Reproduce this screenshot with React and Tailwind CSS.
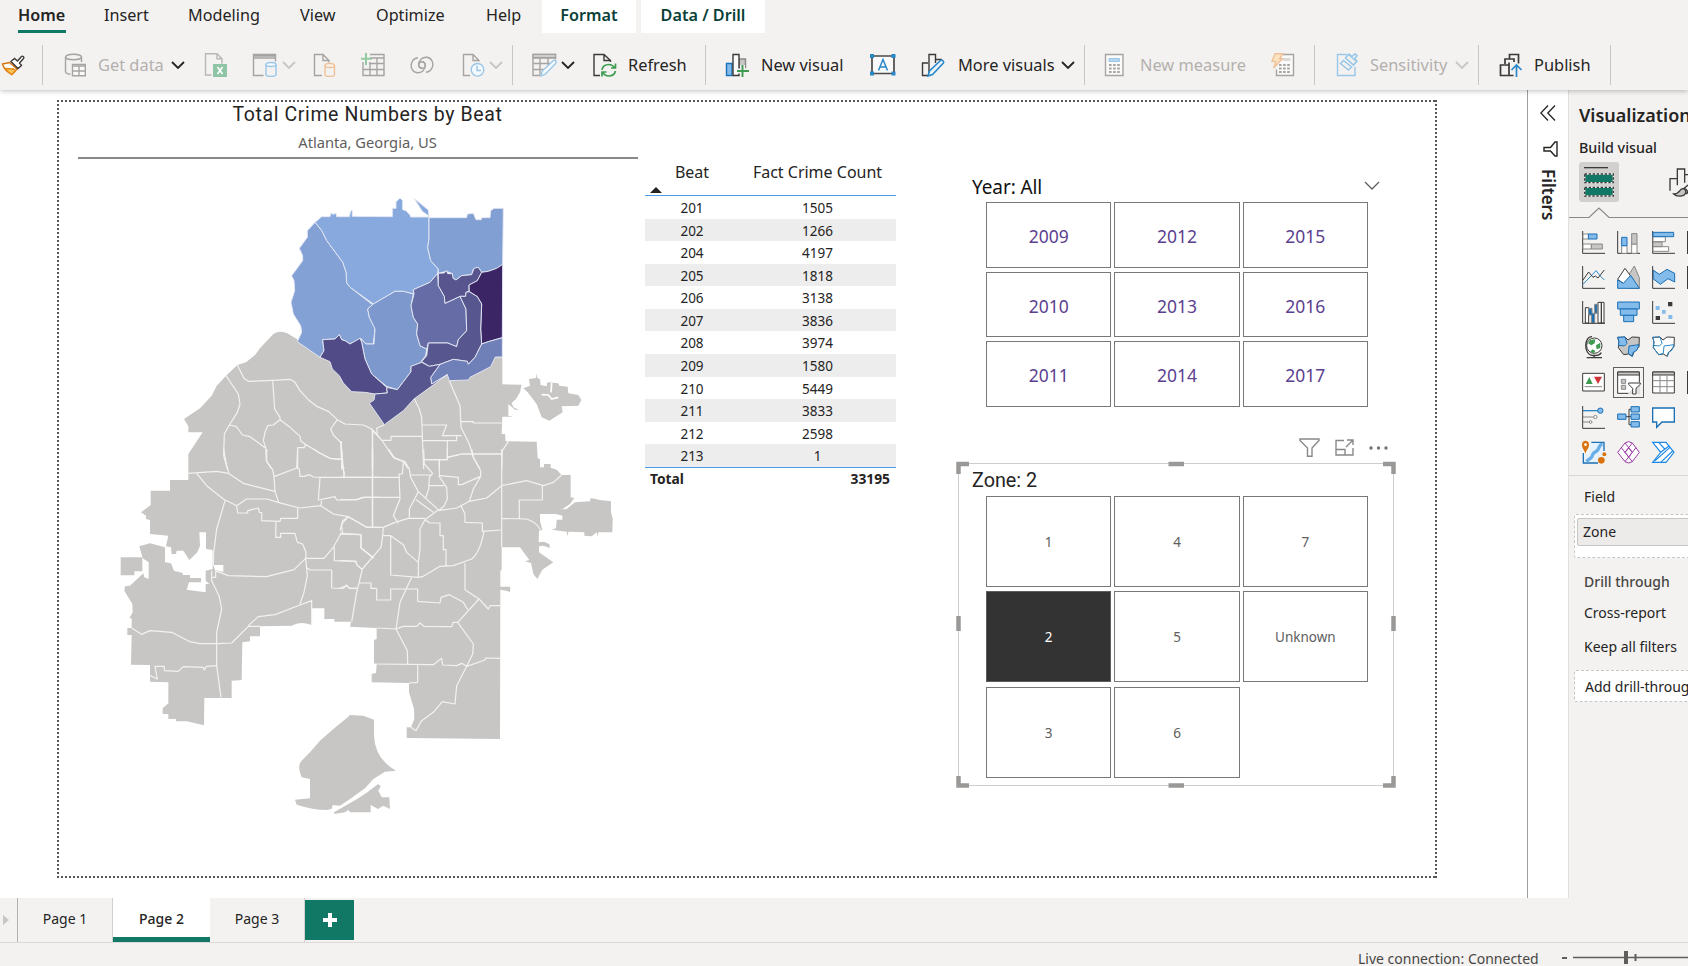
import React from "react";

const GRAY = "#c8c6c4";

function Svg({ className = "w-6 h-6", box = "0 0 24 24", children }) {
  return (
    <svg viewBox={box} className={"shrink-0 block " + className} fill="none" strokeWidth="1.4">
      {children}
    </svg>
  );
}

function Chevron({ className, color = "#252423" }) {
  return (
    <svg viewBox="0 0 14 8" className={"shrink-0 block w-[14px] h-2 " + className} fill="none" stroke={color} strokeWidth="1.8">
      <path d="M1 1l6 6 6-6" />
    </svg>
  );
}

function Sep({ className }) {
  return <div className={"shrink-0 w-px h-10 bg-[#c8c6c4] " + className} />;
}

function Label({ className, children }) {
  return <div className={"shrink-0 text-[16.4px] leading-6 " + className}>{children}</div>;
}

/* ---------- ribbon ---------- */

const menu = [
  ["Insert", "ml-[38px] w-[43px]"],
  ["Modeling", "ml-[41px] w-[72px]"],
  ["View", "ml-[40px] w-[37px]"],
  ["Optimize", "ml-[39px] w-[70px]"],
  ["Help", "ml-[40px] w-[37px]"],
];

function MenuBar() {
  return (
    <div className="flex h-[33px] text-[16.2px] leading-[30px] text-[#252423]">
      <div className="ml-[18px] w-12 border-b-[3px] border-[#117865] font-semibold">Home</div>
      {menu.map(([t, c]) => (
        <div key={t} className={c}>{t}</div>
      ))}
      <div className="ml-[19px] w-[94px] bg-white text-center font-semibold text-[#0b3f38]">Format</div>
      <div className="ml-[5px] w-[124px] bg-white text-center font-semibold text-[#0b3f38]">Data / Drill</div>
    </div>
  );
}

const G = "#a6a4a2";
const swirl = "M12 15.300a3.300 3.300 0 1 1 3.300-3.300c0 4.500-3.500 8-8 7.800C2.500 19.500 0 14 1.800 9.500 3 6.500 5.800 5 8 4.800";

function Toolbar() {
  return (
    <div className="flex h-[57px] items-center pb-[5px] pt-[12px] text-[#252423]">
      <Svg className="ml-[1px] w-6 h-6">
        <path d="M1.5 11l7-1.5L16 16l-5 5.5C6 19 3 16 1.5 11z" fill="#fff" stroke="#d9730d" />
        <path d="M4.500 15.500l8 .5 2 1.500-3.500 4c-3-1.500-5-3.500-6.500-6z" fill="#fcc65a" stroke="#e8891c" />
        <path d="M10 8.500l3.500-3 3 2.500 4-4.500c1-1 3 .5 2 2L18.500 10l2 2.500-3.500 3z" fill="#fff" stroke="#3b3a39" />
      </Svg>
      <Sep className="ml-[17px]" />
      <Svg className="ml-[21px] w-6 h-6">
        <ellipse cx="9.500" cy="4" rx="8" ry="2.800" stroke={G} />
        <path d="M1.500 4v14.500c0 1.500 2 2.500 5 2.800M17.500 4v5" stroke={G} />
        <path d="M8.500 11.500h12.800v11.300H8.500z" stroke={G} fill="#fafafa" />
        <path d="M8.500 13h12.800M8.500 18h12.800M15 13v9.500" stroke={G} />
      </Svg>
      <Label className="ml-[10px] w-[66px] text-[#b3b0ad]">Get data</Label>
      <Chevron className="ml-[7px]" />
      <Svg className="ml-[19px] w-6 h-6">
        <path d="M7.500 22H1.500V.8h11.500l5 5v5" stroke="#b9b7b5" />
        <path d="M13 .8v5h5" stroke="#b9b7b5" />
        <path d="M9 11h14v13H9z" fill="#8fc4a4" />
        <path d="M13.500 14l5 7M18.500 14l-5 7" stroke="#fff" strokeWidth="1.600" />
      </Svg>
      <Svg className="ml-[24px] w-[26px] h-6" box="0 0 26 24">
        <path d="M11.500 22.500H1.500V1.500h22v7M1.500 5h22M1.500 3h22" stroke={G} />
        <path d="M14 11.500v10c0 2.500 10 2.500 10 0v-10" stroke="#9ac7e8" />
        <ellipse cx="19" cy="11.500" rx="5" ry="2" stroke="#9ac7e8" fill="#f3f9fd" />
      </Svg>
      <Chevron className="ml-[4px]" color="#c8c6c4" />
      <Svg className="ml-[17px] w-6 h-6">
        <path d="M9 22.500H1.500v-21H10l6 6v2M10 1.500v6h6" stroke={G} />
        <path d="M12 12.500v9c0 2.500 9.500 2.500 9.500 0v-9" stroke="#eec19a" />
        <ellipse cx="16.800" cy="12.500" rx="4.700" ry="2" stroke="#eec19a" fill="#fdf6ef" />
      </Svg>
      <Svg className="ml-[24px] w-6 h-6">
        <path d="M9 1.500h14v21H2V9M9 5h14M8 10.500h15M2 16.500h21M9 9v13M16 5v17" stroke={G} />
        <path d="M5 0v12M0 5.800h11" stroke="#93c9a3" strokeWidth="2" />
      </Svg>
      <Svg className="ml-[25px] w-6 h-6">
        <path d={swirl} stroke={G} />
        <path d={swirl} stroke={G} transform="rotate(180 12 12)" />
      </Svg>
      <Svg className="ml-[28px] w-6 h-6">
        <path d="M8 22.500H1.500v-21H11l6 6v1M11 1.500v6h6" stroke={G} />
        <circle cx="15.500" cy="16.800" r="6.300" stroke="#9ac7e8" fill="#f3f9fd" />
        <path d="M15 12.500v5h4" stroke="#9ac7e8" />
      </Svg>
      <Chevron className="ml-[3px]" color="#c8c6c4" />
      <Sep className="ml-[9px]" />
      <Svg className="ml-[19px] w-[25px] h-6" box="0 0 25 24">
        <path d="M1 1.500h22.500v5M1 5h22M1 1.500v21h7M1 10.500h17M1 16.500h12M8 5v17M16 5v7" stroke={G} />
        <path d="M1 1.500h22.500v3H1z" fill="#dddbd9" stroke={G} />
        <path d="M9 22.800l1.500-5L21.500 7.500c1.500-1 3.500 1 2.300 2.800L13 21.500z" fill="#f7fbfe" stroke="#9ac7e8" />
      </Svg>
      <Chevron className="ml-[4px]" />
      <Svg className="ml-[18px] w-6 h-6">
        <path d="M7 22.500H1v-21h10l6.500 6V9M11 1.500v6h6.500" stroke="#3b3a39" />
        <path d="M9 17c.5-3.500 3.500-5.500 7-5.500 2.500 0 4.500 1.500 6 3.500M22.500 10.500V15h-4.500M22.500 18c-1 3.500-3.500 5-6.500 5-2.500 0-5-1.200-6-3.500M9 23.500V19h4.500" stroke="#3e9b4f" strokeWidth="1.700" />
      </Svg>
      <Label className="ml-[11px] w-[57px]">Refresh</Label>
      <Sep className="ml-[20px]" />
      <Svg className="ml-[19px] w-6 h-6">
        <path d="M14 6h6.500v9H14z" fill="#c8c6c4" stroke="#8a8886" />
        <path d="M1.500 10.500h5.500v12H1.500z" fill="#83bbea" stroke="#1a73b9" />
        <path d="M8 1.500h6v21H8z" fill="#fafafa" stroke="#3b3a39" />
        <path d="M17.500 12v12M12 18h12" stroke="#f3f2f1" strokeWidth="5" />
        <path d="M17.500 12v12M12 18h12" stroke="#3e9b4f" strokeWidth="1.900" />
      </Svg>
      <Label className="ml-[12px] w-[82px]">New visual</Label>
      <Svg className="ml-[27px] w-[26px] h-6" box="0 0 26 24">
        <path d="M2 3h22v17.500H2z" fill="#fafafa" stroke="#4a4948" strokeWidth="1.700" />
        <path d="M0 1h4v4H0zM21.500 1h4v4h-4zM0 18.500h4v4H0zM21.500 18.500h4v4h-4z" fill="#2b88c8" />
        <path d="M8.500 17.500L13 6.500l4.500 11M10 14h6" stroke="#2b88c8" strokeWidth="1.500" />
      </Svg>
      <Svg className="ml-[25px] w-6 h-6">
        <path d="M7 10H1.500v12.500H7M8 20V1.500h6.500V10M15 6.500h5v3" stroke="#3b3a39" />
        <path d="M7 23l1.500-5L19.500 7.500c1.500-1.200 4 1 2.700 2.800L11.500 21.500z" fill="#eaf4fb" stroke="#2b88c8" strokeWidth="1.600" />
      </Svg>
      <Label className="ml-[13px] w-[96px]">More visuals</Label>
      <Chevron className="ml-[7px]" />
      <Sep className="ml-[9px]" />
      <Svg className="ml-[19px] w-6 h-6">
        <path d="M1.500 1.500h17.500v21H1.500z" fill="#fafafa" stroke={G} />
        <path d="M5 5.500h10.500v3H5z" fill="#b6d7ee" stroke="#9ac7e8" strokeWidth="1" />
        <path d="M5 12h11M5 15.500h11M5 19h11" stroke={G} strokeWidth="2.200" strokeDasharray="2.600 1.500" />
      </Svg>
      <Label className="ml-[12px] w-[105px] text-[#b3b0ad]">New measure</Label>
      <Svg className="ml-[26px] w-6 h-6">
        <path d="M12 1.500h10.500v21H5.500v-6" stroke={G} fill="#fafafa" />
        <path d="M12 5h7.500v3H12z" fill="#dddbd9" />
        <path d="M8 12h12M8 15.500h12M8 19h12" stroke={G} strokeWidth="2.200" strokeDasharray="2.600 1.500" />
        <path d="M4 .8h8l-3.500 5h3L2.500 15 5 8.500H1z" fill="#fce3c2" stroke="#eec19a" />
      </Svg>
      <Sep className="ml-[19px]" />
      <Svg className="ml-[21px] w-6 h-6">
        <path d="M11 1.500H1.500v21h17.500V14" stroke="#9ac7e8" />
        <path d="M4.500 10.500l3-3 8 6.500-3 3zM9.500 5l3-3.500 8 7-3 3.500zM13 1l3 2.500L19 .8l2 2-2.500 3 3 2.700" stroke="#9ac7e8" strokeWidth="1.600" />
      </Svg>
      <Label className="ml-[10px] w-[77px] text-[#b3b0ad]">Sensitivity</Label>
      <Chevron className="ml-[8px]" color="#c8c6c4" />
      <Sep className="ml-[9px]" />
      <Svg className="ml-[20px] w-6 h-6">
        <path d="M6 11V6h4.500M10.500 6V1.500h9v9M6 6h9v3M1.500 12h8.500v10.500H1.500zM10 12V9.500M10 22.500h4.500" stroke="#3b3a39" strokeWidth="1.700" />
        <path d="M17.500 24V12M12.500 17l5-5 5 5" stroke="#2b88c8" strokeWidth="1.700" />
      </Svg>
      <Label className="ml-[11px] w-[57px]">Publish</Label>
      <Sep className="ml-[19px]" />
    </div>
  );
}

/* ---------- crime map ---------- */

const beats = [
  ["#88a9de", "M645 130 665 113 690 113 693 102 700 106 708 102 710 113 748 113 752 95 757 95 757 112 877 113 877 88 888 88 888 68 900 57 908 65 908 92 918 95 930 108 932 114 985 114 985 110 967 97 942 58 985 93 987 114 987 180 983 205 992 245 1015 270 1013 283 990 310 940 332 940 345 910 337 885 337 820 375 750 325 740 312 738 280 728 250 680 185 665 155Z"],
  ["#83a1d4", "M645 130 665 155 680 185 728 250 738 280 740 312 750 325 815 375 820 375 803 390 808 415 825 448 820 495 798 495 782 478 750 495 735 485 725 482 718 467 705 480 668 482 672 515 660 535 592 488 605 460 602 440 580 405 573 370 584 335 582 305 575 290 608 245 608 230 598 208 622 175 622 155Z"],
  ["#819fd2", "M987 116 1100 116 1102 105 1120 103 1128 122 1144 122 1145 116 1170 116 1172 95 1182 88 1210 88 1208 256 1190 268 1165 277 1145 280 1135 265 1120 270 1115 287 1085 290 1068 303 1058 297 1057 284 1040 277 1015 283 1015 270 992 245 983 205 987 180Z"],
  ["#7d98cc", "M820 375 885 337 910 337 940 345 933 380 940 415 953 435 950 465 960 500 980 510 977 530 960 552 933 562 933 578 892 632 860 622 815 585 795 540 785 490 782 478 798 495 822 495 825 450 808 415 803 390Z"],
  ["#514c87", "M668 482 705 480 718 467 725 482 735 485 750 495 780 478 785 490 795 540 815 585 860 625 862 642 825 645 795 640 755 638 730 612 718 590 697 570 690 548 660 535 672 515Z"],
  ["#666da6", "M1013 283 990 310 940 332 942 345 933 380 940 415 953 435 950 465 960 500 980 510 985 492 1043 492 1070 503 1075 482 1100 455 1098 390 1080 352 1035 373 1033 352 1015 320Z"],
  ["#57548e", "M1015 283 1032 282 1040 275 1043 284 1057 284 1059 298 1068 303 1085 290 1115 287 1122 268 1135 265 1145 280 1132 305 1107 318 1107 337 1098 340 1097 352 1080 352 1035 373 1033 352 1015 320Z"],
  ["#3b2565", "M1145 280 1165 277 1190 268 1208 256 1207 476 1165 488 1145 495 1142 450 1145 375 1132 353 1108 338 1107 318 1132 305Z"],
  ["#58568f", "M1098 340 1108 338 1132 353 1145 375 1142 450 1145 495 1125 535 1105 556 1102 547 1060 541 1020 556 988 562 965 548 980 530 985 492 1043 492 1070 503 1075 482 1100 455 1098 390 1080 352 1097 352Z"],
  ["#6f7fb8", "M1207 476 1165 488 1145 495 1125 535 1105 556 1102 547 1060 541 1020 556 992 595 995 615 1042 587 1048 605 1105 603 1110 595 1172 563 1186 534 1207 534Z"],
  ["#58568f", "M965 550 988 562 1020 556 992 595 995 615 1042 587 942 660 910 695 853 737 808 672 822 663 825 645 862 642 860 625 892 632 933 578 933 562Z"],
];

const land = [
  // city body
  "M252 720 300 688 335 650 350 620 378 590 412 558 438 550 465 528 480 508 520 465Q540 452 562 463L590 480 660 535 1207 535 1207 616 1265 617 1260 640 1248 660 1235 672 1240 685 1257 692 1245 692 1225 675 1225 710 1240 713 1207 713 1205 765 1215 765 1217 787 1310 788 1313 838 1320 840 1320 865 1332 865 1332 855 1352 855 1352 866 1370 872 1385 888 1412 888 1412 955 1423 957 1410 975 1385 992 1368 993 1368 1005 1320 1005 1320 1025 1327 1053 1317 1055 1316 1090 1332 1088 1348 1095 1350 1107 1330 1100 1317 1102 1317 1120 1360 1150 1327 1172 1312 1200 1300 1185 1293 1152 1275 1147 1288 1143 1260 1105 1205 1105 1205 1172 1201 1175 1201 1223 1231 1223 1230 1240 1220 1235 1201 1232 1200 1680 920 1677 920 1645 933 1645 943 1620 942 1590 927 1540 927 1512 815 1510 815 1485 828 1482 830 1455 822 1453 822 1383 830 1380 830 1347 750 1343 753 1328 703 1328 703 1320 673 1320 673 1288 635 1288 635 1338Q600 1325 575 1340L480 1342 480 1372 450 1372 450 1387 427 1390 425 1503 395 1505 395 1557 313 1557 312 1639 260 1627 228 1627 228 1620 205 1620 205 1605 188 1605 188 1588 205 1573 205 1510 150 1508 150 1458 93 1457 95 1368 82 1368 82 1347 95 1347 95 1318 88 1318 98 1300 97 1275 73 1235 75 1222 90 1220 130 1183 133 1195 146 1200 146 1150 128 1138 118 1102 150 1093 195 1105 195 1150 213 1153 222 1175 248 1182 248 1188 270 1188 270 1197 303 1197 303 1210 267 1210 260 1232 317 1240 317 1215 328 1215 317 1205 317 1175 338 1170 338 1113 318 1110 318 1060 298 1060 300 1100 292 1120 268 1143 250 1115 230 1115 228 1125 215 1125 213 1105 198 1102 205 1070 150 1065 150 1023 138 1020 138 1010 123 1000 152 978 152 935 210 935 210 903 265 903 265 825 308 760 265 760 265 742Z",
  // west exclave
  "M62 1135H127V1177H103V1189H62Z",
  // north-east exclave
  "M1270 628 1290 620 1287 600 1308 597 1310 582 1312 597 1320 600 1322 618 1340 622 1342 610 1375 613 1378 620 1403 623 1405 643 1435 648 1444 663 1435 680 1385 682 1388 700Q1365 715 1348 725L1325 715 1310 675 1283 640Z",
  // east exclave
  "M1355 1052 1368 1048 1370 1022 1387 1022 1387 1010 1368 1005 1368 993 1400 990 1425 970 1470 967 1472 957 1500 963 1533 967 1533 1000 1538 1020 1537 1060 1495 1060 1493 1072 1490 1060 1475 1072 1453 1070 1453 1060 1405 1058 1403 1073 1400 1058Z",
  // airport
  "M745 1613 750 1608 790 1610 822 1622 822 1670Q825 1740 888 1775L855 1778 820 1800 795 1828 750 1860 720 1880 698 1878 695 1890 680 1893Q640 1893 590 1877L585 1862 630 1858 630 1800 605 1795Q590 1760 605 1745L630 1720 660 1685 700 1650Z",
  "M835 1815 842 1822 835 1835 845 1855 868 1855 870 1890 850 1880 834 1890 812 1878 812 1900 750 1900 745 1893 735 1900 703 1905 702 1900 775 1858 800 1841Z",
];

const bordersNW = "M412 558 432 598 445 607 520 604 570 601 585 610 600 635 625 662 650 682 685 697 712 722 735 735 790 738 815 750 838 775M378 590 415 645 420 675 412 700 388 738 373 765 371 830 382 870M388 738 408 742 428 768 450 773 495 806M518 604 524 690 540 715 540 722 520 738 503 740 495 760 490 785 497 805 499 845 515 870M540 722 570 745 600 772 602 785 618 797 660 822 690 838 722 842M618 797 612 806 593 806 593 870M712 722 692 750 700 768 722 790 725 850 732 870M818 755V870";
const bordersNE = "M92 748 125 783 160 835 190 848 205 870M133 737 110 748 112 765M125 784H153V772H245M222 655 226 665 238 690 245 715 248 800 251 870M248 738H320L307 770H365M248 785H350V772M322 785V840M251 842H322M298 842V870M328 605 360 680 363 745 388 795 400 835 420 870M363 728H400V732H485M322 835 365 825H485M505 788 487 815 485 870M97 755V870M0 788H4L5 870";
const bordersSW = "M265 73 350 67 385 73 430 103 525 127M290 73 320 110 370 150 410 170M371 0 380 50 387 73M500 0V38L518 62 522 83 525 127 536 160M522 83 590 57 593 0M593 57 598 60 600 82 612 82 628 77 640 84 660 85H840M640 0 660 13 690 28 724 30M724 0 728 60 733 70 732 85M818 0V233M660 85 655 153 705 143 710 153 770 152 790 145H840M410 170 440 150 500 150 545 163 600 177 662 170 665 155M410 170 413 192H443V185L475 177 478 190 485 191V215L540 217 542 208H593V178M662 170 700 195 745 203 800 235H840M528 217 527 265H542V253H585L592 280 608 285 618 310 617 328H672L700 295 722 255 783 257V297L822 327M745 203 725 225 727 252M703 295V335L768 337 770 347 787 362M375 155 350 240 341 310 340 350M347 365V385H335M335 365V395L357 440 365 480 350 550V650L363 745M345 365 385 380 500 383 582 362 617 328 622 380 612 430 600 465M622 357 630 363H695V417L730 418 740 408 748 418H772M445 530 475 503 525 497 600 468 635 455V528M480 532H445L395 582 350 584H300L270 578 215 550 150 545 125 556 95 537M150 680 172 690 165 652H193V665L235 667 250 653 310 655 313 663 320 652 350 650";
const bordersSE = "M5 0 12 83M97 0V233M145 0 165 28 195 38 208 60 212 85 235 128 295 182M0 85H180M0 152H50L70 145H180M190 38 187 75H177L180 150 160 200 175 223M0 245 8 215 25 203 80 235H128M128 260 130 235 165 220 205 208H255M235 128 208 180V208M228 152 280 190M251 0 253 45 278 73 268 85 266 120 257 147M212 78H275M298 30V83L320 115 322 150 312 172 295 185M251 32H322V0M322 25 365 15H485M395 0 400 25 422 65V82L365 107H355V85L300 80M422 82 400 120 388 157M268 110H312M295 185 350 177 388 157 440 147 485 110 560 95 610 110 640 100 665 78M295 182 255 212 240 240V300L235 340V385M255 212 270 222H300V260H310V302H318V350M363 170 375 195V220L427 222V247L482 243M485 0V295M485 208 560 210Q590 220 602 243M538 208V153H607V110M432 247Q420 310 395 330L340 350 300 352 250 382 235 385 152 378V260H128L123 295 67 360 50 430 35 518M152 260 190 287 200 310 235 340M0 253 63 257V297L100 327M0 335 48 337 50 347 67 362M0 417 20 410 28 418H50M57 402H93V418H110V453H152V420H233V457L300 462 303 445 328 437 370 460 383 482M215 385 180 460 168 540 202 605 203 645M375 343V422L417 450 445 480 450 470H480M417 450 353 520 400 585 398 615 380 652 350 710 345 765 307 758 280 790 245 815 228 845 213 835M110 537 168 540 190 532H230L240 522 252 532 335 533 340 520H353M110 645 280 647 305 628 308 648 350 650 365 643 380 652 435 633 437 627 480 628M233 648V700L207 702";

function CrimeMap() {
  return (
    <svg viewBox="0 0 1590 1950" className="ml-[22px] mt-[20px] block h-[650px] w-[530px]" fill="none" strokeLinejoin="round">
      {land.map((d) => <path key={d} d={d} fill={GRAY} />)}
      <path d="M340 1158H370V1179L345 1173Z" fill="#fff" />
      <path d="M1325 647 1345 648 1355 660 1375 655M1355 612 1353 640" stroke="#fff" strokeWidth="5" />
      <g stroke="#f3f2f1" strokeWidth="3.600">
        <path d={bordersNW} />
        <path d={bordersNE} transform="translate(720 0)" />
        <path d={bordersSW} transform="translate(0 810)" />
        <path d={bordersSE} transform="translate(720 810)" />
      </g>
      {beats.map(([c, d]) => <path key={d} d={d} fill={c} stroke="#e4e8f3" strokeWidth="2.800" />)}
    </svg>
  );
}

/* ---------- table and slicers ---------- */

const rows = [
  ["201", "1505"], ["202", "1266"], ["204", "4197"], ["205", "1818"], ["206", "3138"], ["207", "3836"],
  ["208", "3974"], ["209", "1580"], ["210", "5449"], ["211", "3833"], ["212", "2598"], ["213", "1"],
];

function BeatTable() {
  return (
    <div className="ml-[7px] mt-[57px] w-[251px] text-[#252423]">
      <div className="flex h-[39px] border-b border-[#4a9be8] text-[16px] leading-[30px]">
        <div className="relative w-[94px] text-center">
          Beat
          <svg viewBox="0 0 12 6" className="absolute bottom-[2px] left-[5px] h-[6px] w-3"><path d="M0 6L6 0l6 6z" fill="#252423" /></svg>
        </div>
        <div className="w-[157px] text-center">Fact Crime Count</div>
      </div>
      {rows.map(([b, c], i) => (
        <div key={b} className={"flex h-[22.57px] text-[13.5px] leading-[24px] " + (i % 2 ? "bg-[#ededed]" : "bg-white")}>
          <div className="w-[94px] text-center">{b}</div>
          <div className="w-[157px] text-center">{c}</div>
        </div>
      ))}
      <div className="flex justify-between border-t border-[#4a9be8] pl-[5px] pr-[6px] text-[13.8px] font-bold leading-[22px]">
        <span>Total</span>
        <span>33195</span>
      </div>
    </div>
  );
}

function YearSlicer() {
  return (
    <div className="h-[345px] pl-[14px] pt-[72px]">
      <div className="flex items-center justify-between pr-[14px]">
        <div className="text-[19px] leading-[30px] text-[#111] tracking-[-0.1px]">Year: All</div>
        <svg viewBox="0 0 16 9" className="-mt-[3px] h-[9px] w-4" fill="none" stroke="#605e5c" strokeWidth="1.300"><path d="M1 1l7 7 7-7" /></svg>
      </div>
      <div className="ml-[14px] grid w-[382px] grid-cols-3 gap-x-[3px] gap-y-[4px]">
        {[2009, 2012, 2015, 2010, 2013, 2016, 2011, 2014, 2017].map((y) => (
          <div key={y} className="h-[65.700px] border border-[#7a7876] text-center text-[17.500px] leading-[66px] text-[#5c3f8f]">{y}</div>
        ))}
      </div>
    </div>
  );
}

function ZoneSlicer() {
  return (
    <div className="mt-[18px] w-[436px]">
      <div className="absolute left-[341px] top-[338px] flex items-center gap-[15px]">
        <svg viewBox="0 0 21 19" className="h-[19px] w-[21px]" fill="none" stroke="#8a8886" strokeWidth="1.400"><path d="M1 1h19v1.500L13 10v8.300H8.500V10L1 2.500z" /></svg>
        <svg viewBox="0 0 19 17" className="h-[17px] w-[19px]" fill="none" stroke="#8a8886" strokeWidth="1.400"><path d="M9 1.500H1V16h17V9M1 10.500h9V16M12 1h6v5M18 1l-7 7" /></svg>
        <svg viewBox="0 0 19 4" className="h-1 w-[19px]" fill="#767472"><circle cx="2" cy="2" r="1.700" /><circle cx="9.500" cy="2" r="1.700" /><circle cx="17" cy="2" r="1.700" /></svg>
      </div>
      <div className="relative h-[323px] border border-[#cfcdcb] pl-[13px] pt-[5px]">
        <div className="h-[27px] font-['Roboto'] text-[19.800px] leading-6 text-[#252423]">Zone: 2</div>
        <div className="ml-[14px] grid w-[382px] grid-cols-3 gap-x-[3px] gap-y-[4.400px]">
          {["1", "4", "7", "2", "5", "Unknown", "3", "6"].map((z) => (
            <div key={z} className={"h-[91px] border text-center text-[13.500px] leading-[91px] " + (z === "2" ? "border-[#605e5c] bg-[#333] text-white" : "border-[#7a7876] text-[#605e5c]")}>{z}</div>
          ))}
        </div>
        <svg viewBox="0 0 440 328" className="absolute -left-[3px] -top-[3px] h-[328px] w-[440px]" fill="none" stroke="#9a9997" strokeWidth="4.500">
          <path d="M2.500 13V3H13M427 3H437.500V13M2.500 315V324.500H13M427 324.500H437.500V315M212.500 3H228M212.500 324.500H228M2.500 155V170M437.500 155V170" />
        </svg>
      </div>
    </div>
  );
}

function ReportPage() {
  return (
    <div className="ml-[57px] mt-[10px] h-[778px] w-[1380px] bg-[image:repeating-linear-gradient(90deg,#555_0_2px,transparent_2px_4px),repeating-linear-gradient(90deg,#555_0_2px,transparent_2px_4px),repeating-linear-gradient(0deg,#555_0_2px,transparent_2px_4px),repeating-linear-gradient(0deg,#555_0_2px,transparent_2px_4px)] bg-[position:top,bottom,left,right] bg-[size:100%_2px,100%_2px,2px_100%,2px_100%] bg-no-repeat">
      <div className="flex">
        <div className="ml-[21px] w-[560px]">
          <div className="h-[59px] border-b-2 border-[#8a8886] pl-[19px] pt-[1px] text-center">
            <div className="font-['Roboto'] text-[19.500px] leading-[27px] tracking-[0.600px] text-[#252423]">Total Crime Numbers by Beat</div>
            <div className="text-[14.700px] leading-[29px] text-[#605e5c]">Atlanta, Georgia, US</div>
          </div>
          <CrimeMap />
        </div>
        <BeatTable />
        <div className="relative ml-[62px] w-[436px]">
          <YearSlicer />
          <ZoneSlicer />
        </div>
      </div>
    </div>
  );
}

/* ---------- side panes ---------- */

const K = "#3b3a39", B = "#1a6fb5", L = "#83bbea", S = "#8a8886";

const vizIcons = [
  // stacked bar, stacked column, clustered bar
  <g><path d="M2 0V67H69" stroke={K} /><path d="M3 9H20V24H3zM3 39H28V54H3z" fill="#fff" stroke={S} /><path d="M19 9H45V24H19z" fill={L} stroke={B} /><path d="M28 39H61V54H28z" fill="#c8c6c4" stroke={S} /></g>,
  <g><path d="M2 0V67H69" stroke={K} /><path d="M14 44H30V67H14zM44 39H60V67H44z" fill="#fff" stroke={S} /><path d="M14 19H30V44H14z" fill={L} stroke={B} /><path d="M44 8H60V39H44z" fill="#c8c6c4" stroke={S} /></g>,
  <g><path d="M2 0V67H69" stroke={K} /><path d="M3 17H40V32H3zM3 47H50V61H3z" fill="#fff" stroke={S} /><path d="M3 33H30V47H3z" fill="#c8c6c4" stroke={S} /><path d="M3 4H65V17H3z" fill={L} stroke={B} /></g>,
  // line, area, stacked area
  <g><path d="M2 0V67H69" stroke={K} /><path d="M3 55L42 14 55 30 67 42" stroke="#2b88c8" /><path d="M3 42L20 18 33 34 40 30 48 36 67 12" stroke={K} /></g>,
  <g><path d="M34 28L52 0 67 35V67H34z" fill="#c8c6c4" stroke={S} /><path d="M2 40L24 7 48 40 30 60z" fill="#fff" stroke={K} /><path d="M2 42L19 52 41 28 67 67H2z" fill={L} stroke={B} /></g>,
  <g><path d="M3 12L22 25 45 10 68 22V48L48 38 25 55 3 38z" fill={L} stroke={B} /><path d="M2 0V67H69" stroke={K} /></g>,
  // ribbon, funnel, scatter
  <g><path d="M10 20H20V66H10zM48 4H58V66H48zM58 4H66V66H58z" fill="#fff" stroke={K} /><path d="M20 22H30V37H38V66H28V42H20zM38 10H46V37H38z" fill={B} stroke={S} /><path d="M2 0V67H69" stroke={K} /></g>,
  <g fill={L} stroke={B}><path d="M2 3H67V24H2z" /><path d="M10 24H60V43H10z" /><path d="M20 43H50V62H20z" /></g>,
  <g><path d="M2 0V67H69" stroke={K} /><path d="M48 3H61V16H48zM11 45H24V57H11z" fill={K} /><path d="M11 15H23V27H11zM30 27H41V38H30zM49 42H61V54H49z" fill={L} /></g>,
  // map, filled map, shape map
  <g><circle cx="37" cy="29" r="23" stroke={K} fill="#fff" /><path d="M25 12L40 10 38 22 28 28 18 22zM42 28L55 20 55 36 44 40zM30 40L40 44 36 52 26 48z" fill="#3e9b4f" /><path d="M30 2C5 2 5 55 30 58 45 60 55 55 58 50M36 58V64M14 65H60" stroke={K} strokeWidth="4" /></g>,
  <g><path d="M2 4L24 3 33 12 45 3 67 4 66 32 50 50 46 61 34 54 20 56 4 35 6 18z" fill="#c8c6c4" stroke={K} /><path d="M2 4L24 3 30 22 22 30 4 28 6 18zM36 30L66 26 60 42 48 50 46 61 34 52z" fill={L} stroke={B} /></g>,
  <g><path d="M2 4L24 3 33 12 45 3 67 4 66 32 50 50 46 61 34 54 20 56 4 35 6 18z" fill="#fff" stroke={K} /><path d="M2 4L24 3 30 22 22 30 4 28 6 18zM4 28V35L20 56 34 52 36 30 66 26 60 42 48 50 46 61" stroke="#2b88c8" /></g>,
  // kpi, slicer, table
  <g><path d="M2 7H67V60H2z" fill="#fff" stroke={K} /><path d="M11 39L22 18 32 39z" fill="#3e9b4f" /><path d="M36 17H60L48 39z" fill="#d13438" /><path d="M8 47H60" stroke={S} /></g>,
  <g><path d="M34 67H2V3H67V34" fill="#fff" stroke={K} /><path d="M2 3H67V12H2z" fill="#c8c6c4" stroke={K} /><path d="M13 25H26V37H13zM13 43H26V55H13z" fill="#c8c6c4" stroke={S} /><path d="M35 36H70V40L57 52V69H47V52L35 40z" fill="#fff" stroke={K} /></g>,
  <g><path d="M2 3H67V66H2z" fill="#fff" stroke={K} /><path d="M2 3H67V12H2z" fill="#c8c6c4" stroke={K} /><path d="M2 29H67M2 47H67M24 12V66M45 12V66" stroke={S} /></g>,
  // key influencers, decomposition tree, q&a
  <g><path d="M3 14H48" stroke="#2b88c8" strokeWidth="4" /><circle cx="55" cy="14" r="8" fill={L} stroke={B} /><path d="M3 33H36M3 48H22" stroke={S} /><circle cx="40" cy="33" r="5" fill="#fff" stroke={S} /><circle cx="26" cy="48" r="4" fill="#fff" stroke={S} /><path d="M2 0V67H69" stroke={K} /></g>,
  <g><path d="M27 32H42M42 10H36V56H42" stroke={K} /><path d="M2 24H27V40H2zM42 2H67V18H42zM42 24H67V40H42zM42 47H67V63H42z" fill={L} stroke={B} /></g>,
  <g><path d="M2 6H67V48H30L14 64V48H2z" fill="#fff" stroke={B} strokeWidth="4" /></g>,
  // arcgis, power apps, power automate
  <g><path d="M4 30V66H66V50M30 4H66V40" fill="#fff" /><path d="M28 4H66V38L50 66H4V40L20 36z" fill="#e8f2fb" /><path d="M4 36V66H48M28 4H66V30" stroke={B} strokeWidth="4" /><path d="M62 10C48 10 54 24 44 30S34 36 30 46 20 52 14 62" stroke="#69aee6" strokeWidth="10" /><path d="M0 10C0-4 21-4 21 10 21 25 12 26 10 40 8 26 0 25 0 10z" fill="#d9730d" /><circle cx="10.500" cy="11" r="4" fill="#fff" /><circle cx="67" cy="40" r="6" fill="#d9730d" /><circle cx="58" cy="58" r="10" fill="#d9730d" /></g>,
  <g stroke="#9a3ba6"><path d="M2 34L24 6 35 2 46 6 67 34 46 62 35 66 24 62z" fill="#fff" /><path d="M24 6L46 34 24 62M46 6L24 34 46 62M13 20L24 34M57 20L46 34M35 20L46 34 35 48 24 34z" /></g>,
  <g stroke="#1e88e5" fill="#fff" strokeWidth="3.500"><path d="M2 4H42L66 34 42 64H2L26 34z" /><path d="M26 34L52 14M8 60L54 19M26 64L62 30M20 4L38 24" /></g>,
];

function FiltersPane() {
  return (
    <div className="w-[41px] shrink-0 border-l border-[#a19f9d] bg-white">
      <svg viewBox="0 0 16 16" className="ml-[12px] mt-[15px] h-4 w-4" fill="none" stroke="#252423" strokeWidth="1.300"><path d="M8 .5L.8 8 8 15.500M15 .5L7.800 8l7.200 7.500" /></svg>
      <svg viewBox="0 0 15 16" className="ml-[15px] mt-[20px] h-4 w-[15px]" fill="none" stroke="#252423" strokeWidth="1.400"><path d="M14 1v14h-2L7.500 10H1V6.500h6.500L12 1z" /></svg>
      <div className="ml-[8px] mt-[12px] text-[17px] font-semibold leading-6 text-[#252423] [writing-mode:vertical-rl]">Filters</div>
    </div>
  );
}

function VizPane() {
  return (
    <div className="w-[120px] shrink-0 overflow-hidden border-l border-[#e1dfdd] bg-[#f3f2f1] text-[#252423]">
      <div className="ml-[10px] mt-[10px] text-[18px] font-semibold leading-[30px]">Visualizations</div>
      <div className="ml-[10px] mt-[6px] text-[14.300px] font-medium leading-[24px]">Build visual</div>
      <div className="ml-[10px] mt-[2px] flex w-[160px]">
        <div className="h-10 w-10 rounded-[3px] bg-[#d2d0ce]">
          <svg viewBox="0 0 120 120" className="h-10 w-10" fill="none" stroke={K} strokeWidth="4">
            <path d="M15 17H87" />
            <path d="M17 36H103V62H17zM17 76H103V102H17z" fill="#117865" stroke="#eee" />
            <path d="M17 36H103V62H17zM17 76H103V102H17z" strokeDasharray="7 5" />
          </svg>
        </div>
        <svg viewBox="0 0 90 90" className="ml-[50px] mt-[6px] h-[30px] w-[30px]" fill="none" stroke={K} strokeWidth="4">
          <path d="M3 68V32H25M25 52V3H47V44M47 20H68V40" />
          <path d="M80 32L44 62C54 62 58 70 52 78L88 40z" fill="#fff" />
          <path d="M42 62C30 62 34 78 14 78 24 88 48 86 50 74 51 66 48 63 42 62z" fill="#c8c6c4" />
        </svg>
      </div>
      <svg viewBox="0 0 119 12" className="mt-[5px] block h-3 w-[119px]" fill="none" stroke={S} strokeWidth="1.200"><path d="M0 10.500H20L30 1 40 10.500H119" /></svg>
      <div className="ml-[13px] mt-[12px] grid w-[140px] grid-cols-[repeat(4,23px)] gap-x-3 gap-y-3">
        {vizIcons.map((g, i) => (
          <React.Fragment key={i}>
            <svg viewBox="0 0 69 69" className={"h-[23px] w-[23px] overflow-visible " + (i === 13 ? "bg-[#e1dfdd] outline outline-1 outline-offset-[3px] outline-[#605e5c]" : "")} fill="none" strokeWidth="3">{g}</svg>
            {i % 3 === 2 && <div className={"h-[23px] " + (i < 3 || i === 5 || i === 14 ? "bg-[#3b3a39]" : "")} />}
          </React.Fragment>
        ))}
      </div>
      <div className="mt-[11px] border-t border-[#d8d6d4] pl-[15px] pt-[9px] text-[14px] leading-6">Field</div>
      <div className="ml-[5px] mt-[5px] h-[44px] w-[140px] rounded-[2px] border border-dashed border-[#c8c6c4] bg-white pl-[2px] pt-[3px]">
        <div className="h-7 rounded-[2px] border border-[#c8c6c4] bg-[#edebe9] pl-[5px] text-[14px] leading-[26px]">Zone</div>
      </div>
      <div className="ml-[15px] mt-[12px] text-[14px] font-medium leading-6 text-[#484644]">Drill through</div>
      <div className="ml-[15px] mt-[7px] text-[14px] leading-6">Cross-report</div>
      <div className="ml-[15px] mt-[10px] text-[14px] leading-6">Keep all filters</div>
      <div className="ml-[5px] mt-[11px] h-8 w-[180px] rounded-[2px] border border-dashed border-[#c8c6c4] bg-white pl-[10px] text-[14px] leading-[31px]">Add drill-through fields here</div>
    </div>
  );
}

/* ---------- footer ---------- */

function PageTabs() {
  return (
    <div className="flex h-[45px] border-b border-[#dddbd9] text-center text-[14px] leading-[42px] text-[#252423]">
      <div className="flex w-[17px] items-center">
        <svg viewBox="0 0 6 10" className="ml-[3px] h-[10px] w-[6px]"><path d="M0 0l6 5-6 5z" fill="#c8c6c4" /></svg>
      </div>
      <div className="w-[96px] border-x border-[#b3b0ad] border-r-[#d2d0ce]">Page 1</div>
      <div className="w-[97px] border-b-[5px] border-[#117865] bg-white font-medium">Page 2</div>
      <div className="w-[95px] border-r border-[#d2d0ce]">Page 3</div>
      <div className="mt-[2px] flex h-10 w-[49px] items-center justify-center bg-[#117865]">
        <svg viewBox="0 0 14 14" className="h-[14px] w-[14px]" stroke="#fff" strokeWidth="4"><path d="M7 0v14M0 7h14" /></svg>
      </div>
    </div>
  );
}

function StatusBar() {
  return (
    <div className="flex h-[23px] text-[14px] leading-[15px] text-[#484644]">
      <div className="ml-[1358px] mt-[8px] w-[181px]">Live connection: Connected</div>
      <svg viewBox="0 0 126 18" className="ml-[23px] mt-[5px] h-[18px] w-[126px]" stroke="#605e5c" fill="none">
        <path d="M0 10H5" strokeWidth="2" />
        <path d="M11 9.500H126" strokeWidth="1.300" />
        <path d="M64 3V16" strokeWidth="4" />
        <path d="M73.500 6V13" strokeWidth="2" />
      </svg>
    </div>
  );
}

export default function App() {
  return (
    <div className="flex h-[966px] w-[1688px] flex-col overflow-hidden whitespace-nowrap bg-[#f3f2f1] font-['Noto_Sans','Open_Sans',sans-serif]">
      <div className="relative z-10 h-[90px] bg-[#f3f2f1] shadow-[0_1px_5px_rgba(0,0,0,0.25)]">
        <MenuBar />
        <Toolbar />
      </div>
      <div className="flex h-[808px] overflow-hidden">
        <div className="w-[1527px] shrink-0 bg-white">
          <ReportPage />
        </div>
        <FiltersPane />
        <VizPane />
      </div>
      <PageTabs />
      <StatusBar />
    </div>
  );
}
